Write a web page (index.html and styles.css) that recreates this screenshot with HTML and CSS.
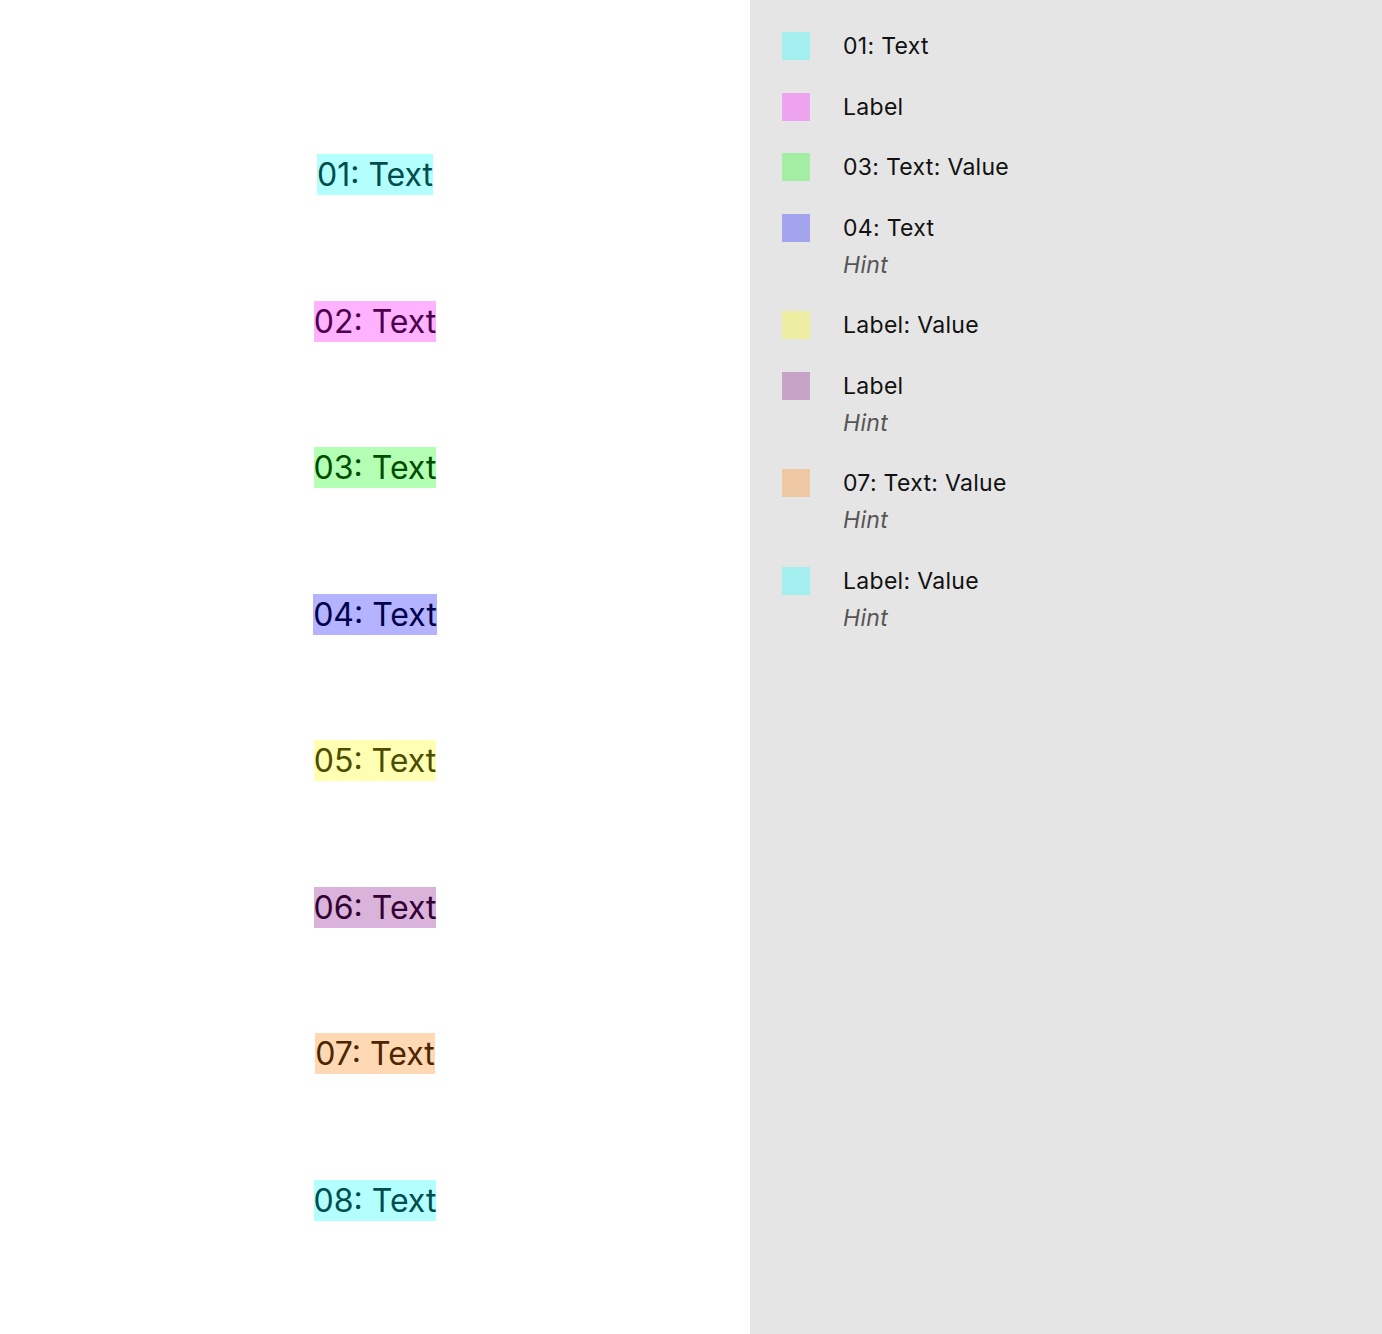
FILE: index.html
```html
<!DOCTYPE html>
<html>
<head>
<meta charset="utf-8">
<link rel="stylesheet" href="styles.css">
</head>
<body>
<div class="app">
  <main class="canvas">
    <span class="tag c1">01: Text</span>
    <span class="tag c2">02: Text</span>
    <span class="tag c3">03: Text</span>
    <span class="tag c4">04: Text</span>
    <span class="tag c5">05: Text</span>
    <span class="tag c6">06: Text</span>
    <span class="tag c7">07: Text</span>
    <span class="tag c8">08: Text</span>
  </main>
  <aside class="legend">
    <div class="item"><span class="swatch s1"></span><div class="txt"><div class="title">01: Text</div></div></div>
    <div class="item"><span class="swatch s2"></span><div class="txt"><div class="title">Label</div></div></div>
    <div class="item"><span class="swatch s3"></span><div class="txt"><div class="title">03: Text: Value</div></div></div>
    <div class="item"><span class="swatch s4"></span><div class="txt"><div class="title">04: Text</div><div class="hint">Hint</div></div></div>
    <div class="item"><span class="swatch s5"></span><div class="txt"><div class="title">Label: Value</div></div></div>
    <div class="item"><span class="swatch s6"></span><div class="txt"><div class="title">Label</div><div class="hint">Hint</div></div></div>
    <div class="item"><span class="swatch s7"></span><div class="txt"><div class="title">07: Text: Value</div><div class="hint">Hint</div></div></div>
    <div class="item"><span class="swatch s8"></span><div class="txt"><div class="title">Label: Value</div><div class="hint">Hint</div></div></div>
  </aside>
</div>
</body>
</html>
```
FILE: styles.css
```css
html, body {
  margin: 0;
  padding: 0;
}
body {
  font-family: Inter, "Noto Sans", sans-serif;
  width: 1382px;
  height: 1334px;
  overflow: hidden;
}
.app {
  display: flex;
  height: 1334px;
}
.canvas {
  width: 750px;
  background: #ffffff;
  display: flex;
  flex-direction: column;
  align-items: center;
  padding-top: 154px;
  gap: 105.57px;
  box-sizing: border-box;
}
.tag {
  font-size: 32px;
  line-height: 41px;
  height: 41px;
  white-space: nowrap;
}
.c1 { background: #b3ffff; color: #004d4d; }
.c2 { background: #ffb3ff; color: #4d004d; }
.c3 { background: #b3ffb3; color: #004d00; }
.c4 { background: #b3b3ff; color: #00004d; }
.c5 { background: #ffffb3; color: #4d4d00; }
.c6 { background: #d9b3d9; color: #330033; }
.c7 { background: #ffd9b3; color: #4d2600; }
.c8 { background: #b3ffff; color: #004d4d; }

.legend {
  flex: 1;
  background: #e5e5e5;
  padding: 32px 0 0 32px;
  display: flex;
  flex-direction: column;
  gap: 32.5px;
}
.item {
  display: flex;
  gap: 33px;
  align-items: flex-start;
}
.swatch {
  width: 28px;
  height: 28px;
  flex: none;
}
.s1 { background: #a3eeee; }
.s2 { background: #eea3ee; }
.s3 { background: #a3eea3; }
.s4 { background: #a3a3ee; }
.s5 { background: #eeeea3; }
.s6 { background: #c8a3c8; }
.s7 { background: #eec8a3; }
.s8 { background: #a3eeee; }
.txt {
  display: flex;
  flex-direction: column;
  gap: 9px;
}
.title, .hint {
  font-size: 23px;
  line-height: 28px;
  height: 28px;
  letter-spacing: 0.3px;
  white-space: nowrap;
}
.title { color: #111111; }
.hint {
  color: #555555;
  font-style: italic;
}
```
